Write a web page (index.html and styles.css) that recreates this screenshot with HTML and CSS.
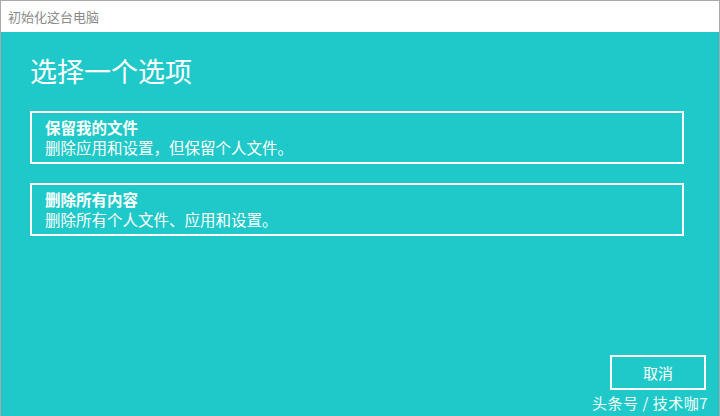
FILE: index.html
```html
<!DOCTYPE html>
<html lang="zh-CN">
<head>
  <meta charset="UTF-8" />
  <meta name="viewport" content="width=device-width, initial-scale=1.0"/>
  <title>初始化这台电脑</title>
  <link rel="stylesheet" href="styles.css">
</head>
<body>

<div class="window">
  <div class="titlebar">初始化这台电脑</div>

  <div class="content">
    <h1>选择一个选项</h1>

    <div class="option">
      <strong>保留我的文件</strong>
      <span>删除应用和设置，但保留个人文件。</span>
    </div>

    <div class="option">
      <strong>删除所有内容</strong>
      <span>删除所有个人文件、应用和设置。</span>
    </div>

    <div class="footer">
      <button class="btn-cancel">取消</button>
      <div class="mark">头条号 / 技术咖7</div>
    </div>
  </div>
</div>

</body>
</html>
```

FILE: styles.css
```css
* {
  box-sizing: border-box;
}

body {
  margin: 0;
  padding: 0;
  font-family: "Microsoft YaHei", "Noto Sans CJK SC", sans-serif;
  background: #1fc9c9;
}

.window {
  width: 720px;
  height: 416px;
  display: flex;
  flex-direction: column;
  border: 1px solid #a9a9a9;
  border-bottom: none;
  overflow: hidden;
}

.titlebar {
  height: 31px;
  flex-shrink: 0;
  background: #fff;
  color: #8a8a8a;
  font-size: 13px;
  line-height: 31px;
  padding-left: 7px;
}

.content {
  flex: 1;
  background: #1fc9c9;
  color: #fff;
  padding: 0 35px 0 29px;
  display: flex;
  flex-direction: column;
}

h1 {
  margin: 20px 0 21px 0;
  font-size: 27px;
  font-weight: normal;
  line-height: 38px;
}

.option {
  display: flex;
  flex-direction: column;
  justify-content: center;
  border: 2px solid #fff;
  height: 53px;
  padding: 0 13px 1px;
  margin-bottom: 19px;
  font-size: 15.5px;
  line-height: 20px;
}

.option strong {
  font-weight: bold;
}

.footer {
  margin-top: auto;
  display: flex;
  flex-direction: column;
  align-items: flex-end;
  margin-right: -22px;
  padding-bottom: 3px;
}

.btn-cancel {
  width: 96px;
  height: 35px;
  background: transparent;
  border: 2px solid #fff;
  color: #fff;
  font-family: inherit;
  font-size: 15px;
}

.mark {
  margin-top: 3px;
  margin-right: -2px;
  font-size: 15px;
  letter-spacing: 0.5px;
  line-height: 20px;
  color: #f4ffff;
}
```
